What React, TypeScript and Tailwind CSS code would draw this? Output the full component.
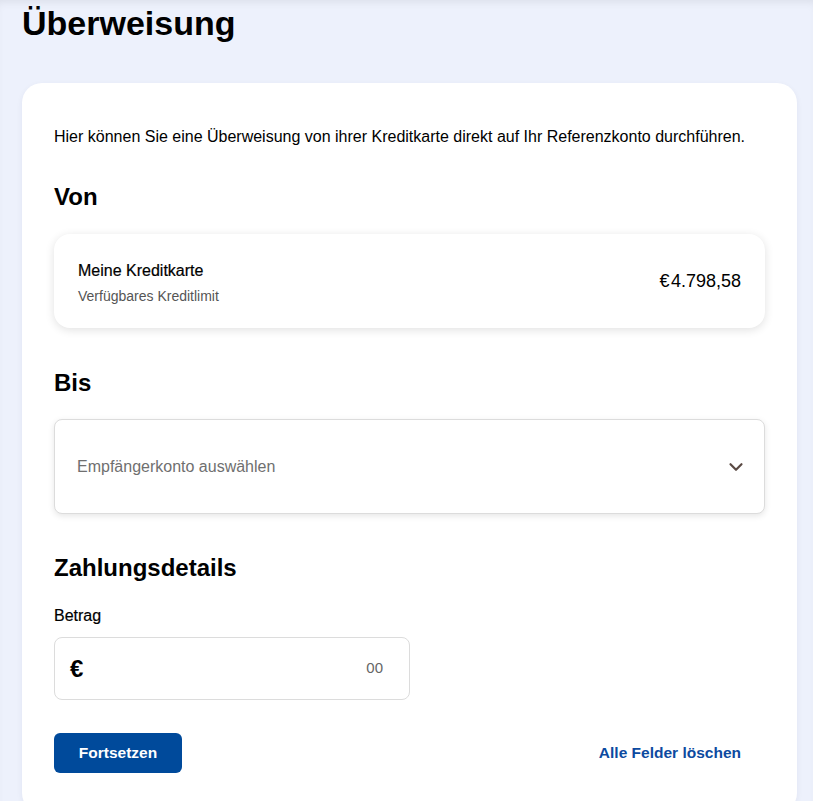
import React from "react";

export default function App() {
  return (
    <div
      className="min-h-[801px] w-full bg-[#edf1fc] shadow-[inset_0_6px_8px_-4px_rgba(0,0,0,0.08)] overflow-hidden"
      style={{ fontFamily: '"Liberation Sans", Arial, sans-serif' }}
    >
      <div className="pl-[22px] pr-[16px]">
        <h1 className="pt-[3px] text-[34px] leading-[40px] font-bold text-black">
          Überweisung
        </h1>
        <div className="mt-[40px] h-[730px] rounded-[20px] bg-white px-[32px] pt-[44px] shadow-[0_2px_6px_rgba(30,40,90,0.06)]">
          <p className="text-[16px] leading-[20px] text-black">
            Hier können Sie eine Überweisung von ihrer Kreditkarte direkt auf Ihr Referenzkonto durchführen.
          </p>

          <h2 className="mt-[36px] text-[24px] leading-[28px] font-bold text-black">Von</h2>
          <div className="mt-[23px] flex h-[94px] items-center justify-between rounded-[16px] bg-white px-[24px] shadow-[0_2px_10px_rgba(0,0,0,0.12)]">
            <div className="flex flex-col pt-[3px]">
              <span className="text-[16px] leading-[20px] text-black [-webkit-text-stroke:0.2px_black]">Meine Kreditkarte</span>
              <span className="mt-[6px] text-[14px] leading-[18px] text-[#555]">Verfügbares Kreditlimit</span>
            </div>
            <span className="text-[18px] leading-[22px] text-black">€&#8202;4.798,58</span>
          </div>

          <h2 className="mt-[41px] text-[24px] leading-[28px] font-bold text-black">Bis</h2>
          <div className="mt-[22px] flex h-[95px] items-center justify-between rounded-[8px] border border-[#dcdcdc] bg-white pl-[22px] pr-[17px] shadow-[0_2px_6px_rgba(0,0,0,0.1)]">
            <span className="text-[16px] leading-[20px] text-[#6f6f6f]">Empfängerkonto auswählen</span>
            <svg width="22" height="22" viewBox="0 0 24 24" fill="none" stroke="#5a4a44" strokeWidth="2.4" strokeLinecap="round" strokeLinejoin="round">
              <path d="M6 9l6 6 6-6" />
            </svg>
          </div>

          <h2 className="mt-[40px] text-[24px] leading-[28px] font-bold text-black">Zahlungsdetails</h2>
          <div className="mt-[24px] text-[16px] leading-[20px] text-black [-webkit-text-stroke:0.2px_black]">Betrag</div>
          <div className="mt-[11px] flex h-[63px] w-[356px] items-center justify-between rounded-[8px] border border-[#dcdcdc] bg-white pl-[15px] pr-[26px]">
            <span className="text-[24px] leading-[28px] font-bold text-black">€</span>
            <span className="text-[15px] text-[#666]">00</span>
          </div>

          <div className="mt-[33px] flex items-center justify-between pr-[24px]">
            <button className="h-[40px] w-[128px] rounded-[6px] bg-[#004a9b] text-[15.5px] font-bold text-white">
              Fortsetzen
            </button>
            <span className="text-[15.5px] font-bold text-[#0c4aa0]">Alle Felder löschen</span>
          </div>
        </div>
      </div>
    </div>
  );
}
